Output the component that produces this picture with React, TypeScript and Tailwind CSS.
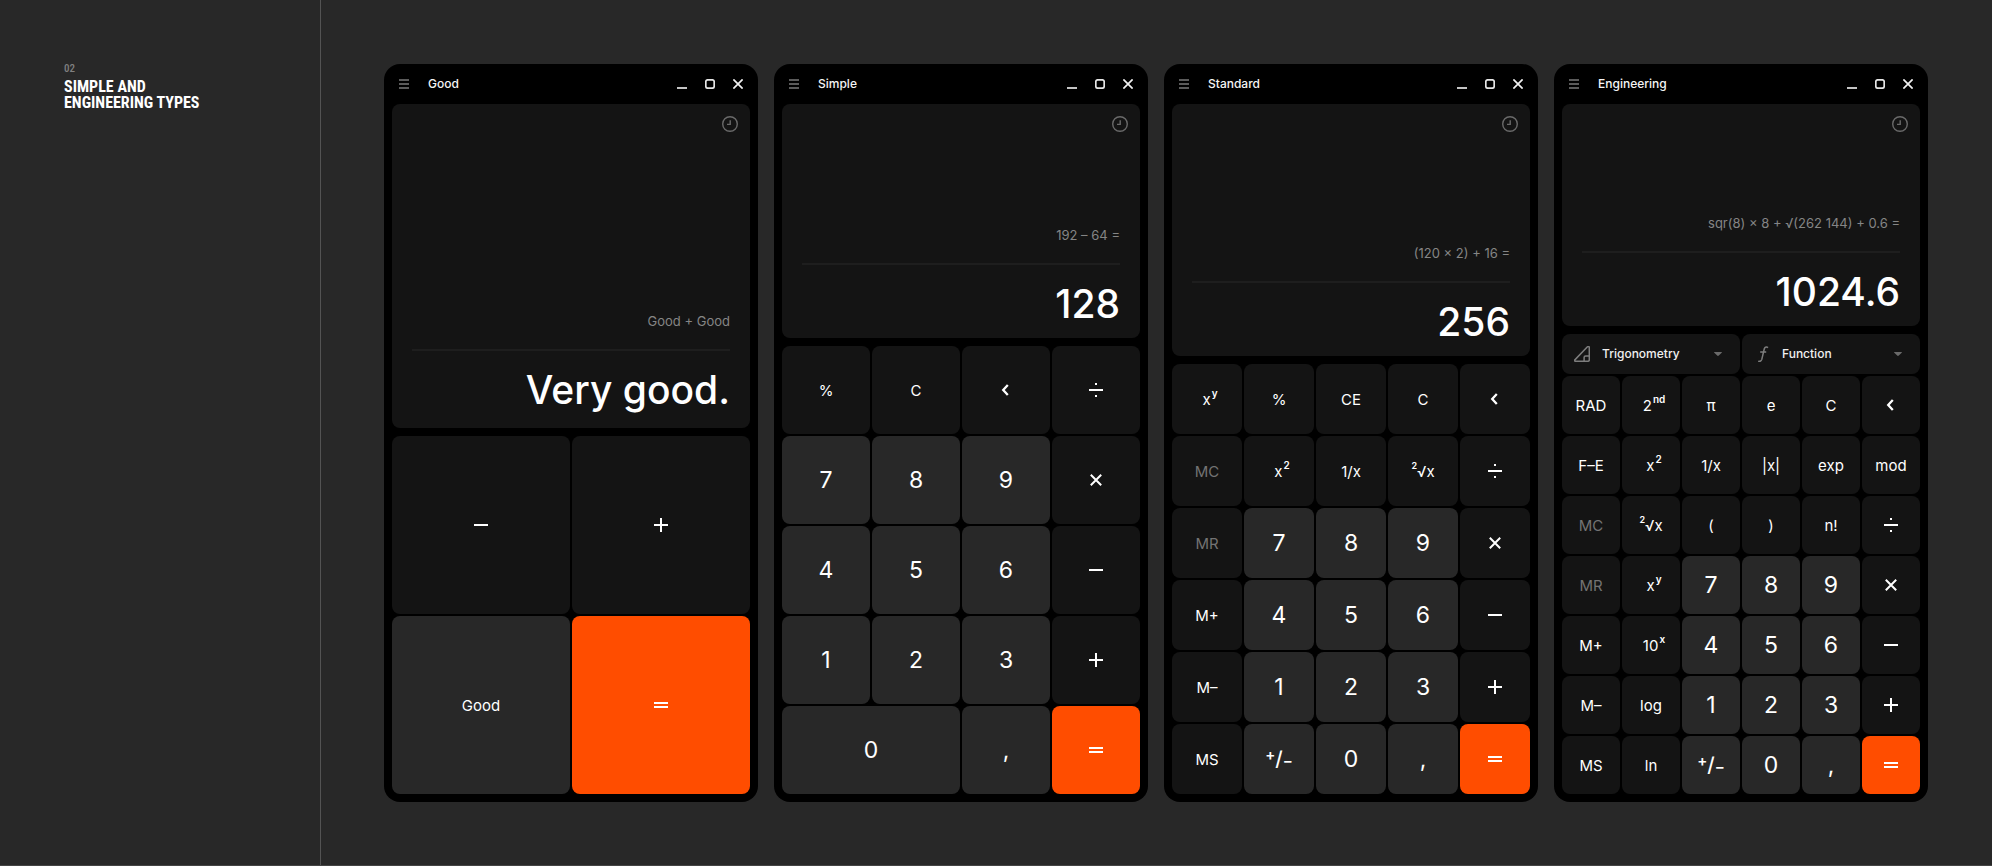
import type { ReactNode } from "react";

type Tone = "dark" | "light" | "accent";

type KeyDef = {
  name: string;
  face?: ReactNode;
  tone?: Tone;
  big?: boolean;
  disabled?: boolean;
  wide?: boolean;
};

const toneClass: Record<Tone, string> = {
  dark: "bg-[#141414] hover:bg-[#1c1c1c]",
  light: "bg-[#282828] hover:bg-[#323232]",
  accent: "bg-[#ff4d00] hover:bg-[#ff6219]",
};

/* ---------- icons ---------- */

function Glyph({ children }: { children: ReactNode }) {
  return (
    <svg viewBox="0 0 14 14" className="size-3.5" fill="none" stroke="currentColor" strokeWidth="2" aria-hidden="true">
      {children}
    </svg>
  );
}

const minusIcon = <Glyph><path d="M0 7h14" /></Glyph>;
const plusIcon = <Glyph><path d="M0 7h14M7 0v14" /></Glyph>;
const equalsIcon = <Glyph><path d="M0 5h14M0 9h14" /></Glyph>;
const timesIcon = <Glyph><path d="M1.8 1.8l10.4 10.4M12.2 1.8L1.8 12.2" /></Glyph>;
const divideIcon = <Glyph><path d="M0 7h14M6 1h2M6 13h2" /></Glyph>;
const backIcon = <Glyph><path d="M8.8 2L4.2 7l4.6 5" strokeWidth="2.3" /></Glyph>;

function MenuIcon() {
  return (
    <svg viewBox="0 0 10 10" className="size-2.5" stroke="#7a7a7a" strokeWidth="1.6" aria-hidden="true">
      <path d="M0 1h10M0 5h10M0 9h10" />
    </svg>
  );
}

function MinimizeIcon() {
  return (
    <svg viewBox="0 0 10 10" className="size-2.5" stroke="#c4c4c4" strokeWidth="2" aria-hidden="true">
      <path d="M0 9h10" />
    </svg>
  );
}

function MaximizeIcon() {
  return (
    <svg viewBox="0 0 10 10" className="size-2.5" fill="none" stroke="#e6e6e6" strokeWidth="1.7" aria-hidden="true">
      <rect x="0.8" y="0.8" width="8.4" height="8.4" rx="2" />
    </svg>
  );
}

function CloseIcon() {
  return (
    <svg viewBox="0 0 10 10" className="size-2.5" stroke="#f2f2f2" strokeWidth="1.7" aria-hidden="true">
      <path d="M0.4 0.4l9.2 9.2M9.6 0.4L0.4 9.6" />
    </svg>
  );
}

function HistoryIcon() {
  return (
    <svg viewBox="0 0 16 16" className="size-4" fill="none" stroke="#6a6a6a" strokeWidth="1.4" aria-hidden="true">
      <circle cx="8" cy="8" r="7.3" />
      <path d="M8.2 4.2v4.2H5" />
    </svg>
  );
}

function TriangleIcon() {
  return (
    <svg viewBox="0 0 16 16" className="size-4 shrink-0" fill="none" stroke="#7d7d7d" strokeWidth="1.5" strokeLinejoin="round" aria-hidden="true">
      <path d="M13.2 1C14.4 0 15.3 0.4 15.3 1.7V13.8C15.3 14.8 14.8 15.3 13.8 15.3H1.6C0.4 15.3 0.2 14.5 1.1 13.6Z" />
      <path d="M15.3 10H11.6C10.6 10 10.1 10.5 10.1 11.5V15.3" />
    </svg>
  );
}

function FunctionIcon() {
  return (
    <svg viewBox="0 0 16 16" className="size-4 shrink-0" fill="none" stroke="#7d7d7d" strokeWidth="1.5" aria-hidden="true">
      <path d="M14 1.6C13 0.6 10.9 0.4 10.3 2.8L7.8 13.4C7.2 15.4 5.4 15.6 4.2 15.1M6.2 6H12.2" />
    </svg>
  );
}

function CaretIcon() {
  return (
    <svg viewBox="0 0 8 4" className="pointer-events-none h-1 w-2 shrink-0" fill="#6a6a6a" aria-hidden="true">
      <path d="M0.6 0H7.4C8 0 8 0.5 7.7 0.8L4.8 3.6C4.3 4.1 3.7 4.1 3.2 3.6L0.3 0.8C0 0.5 0 0 0.6 0Z" />
    </svg>
  );
}

/* ---------- key faces ---------- */

function Power({ base, exp }: { base: string; exp: string }) {
  return (
    <span className="pl-1.5">
      {base}
      <sup className="-top-2 ml-px text-[10px] font-semibold">{exp}</sup>
    </span>
  );
}

const rootFace = (
  <span>
    <sup className="-top-2 text-[9px] font-semibold">2</sup>√x
  </span>
);

const signFace = (
  <span className="text-[20px] font-medium">
    <sup className="-top-1.5 text-[15px] font-semibold">+</sup>/
    <sub className="bottom-0 text-[15px] font-semibold">−</sub>
  </span>
);

/* ---------- key sets ---------- */

const digit = (name: string, wide = false): KeyDef => ({ name, tone: "light", big: true, wide });
const fn = (name: string, face?: ReactNode): KeyDef => ({ name, face });
const off = (name: string): KeyDef => ({ name, disabled: true });

const divide = fn("divide", divideIcon);
const times = fn("multiply", timesIcon);
const minus = fn("minus", minusIcon);
const plus = fn("plus", plusIcon);
const back = fn("backspace", backIcon);
const equals: KeyDef = { name: "equals", face: equalsIcon, tone: "accent" };
const square = fn("x squared", <Power base="x" exp="2" />);
const power = fn("x to the y", <Power base="x" exp="y" />);
const root = fn("square root", rootFace);
const sign: KeyDef = { name: "plus minus", face: signFace, tone: "light" };

const goodKeys: KeyDef[] = [minus, plus, { name: "Good", tone: "light" }, equals];

const simpleKeys: KeyDef[] = [
  fn("%"), fn("C"), back, divide,
  digit("7"), digit("8"), digit("9"), times,
  digit("4"), digit("5"), digit("6"), minus,
  digit("1"), digit("2"), digit("3"), plus,
  digit("0", true), digit(","), equals,
];

const standardKeys: KeyDef[] = [
  power, fn("%"), fn("CE"), fn("C"), back,
  off("MC"), square, fn("1/x"), root, divide,
  off("MR"), digit("7"), digit("8"), digit("9"), times,
  fn("M+"), digit("4"), digit("5"), digit("6"), minus,
  fn("M–"), digit("1"), digit("2"), digit("3"), plus,
  fn("MS"), sign, digit("0"), digit(","), equals,
];

const engineeringKeys: KeyDef[] = [
  fn("RAD"), fn("second functions", <Power base="2" exp="nd" />), fn("π"), fn("e"), fn("C"), back,
  fn("F–E"), square, fn("1/x"), fn("|x|"), fn("exp"), fn("mod"),
  off("MC"), root, fn("("), fn(")"), fn("n!"), divide,
  off("MR"), power, digit("7"), digit("8"), digit("9"), times,
  fn("M+"), fn("10 to the x", <Power base="10" exp="x" />), digit("4"), digit("5"), digit("6"), minus,
  fn("M–"), fn("log"), digit("1"), digit("2"), digit("3"), plus,
  fn("MS"), fn("ln"), sign, digit("0"), digit(","), equals,
];

/* ---------- parts ---------- */

function Key({ def }: { def: KeyDef }) {
  const size = def.big ? "text-[23px]" : "text-[15px]";
  const color = def.disabled ? "text-[#737373]" : "text-white";
  const span = def.wide ? "col-span-2" : "aspect-square";
  return (
    <button
      type="button"
      disabled={def.disabled}
      aria-label={def.face ? def.name : undefined}
      className={`flex min-w-0 items-center justify-center rounded-lg leading-none ${size} ${color} ${span} ${toneClass[def.tone ?? "dark"]}`}
    >
      {def.face ?? def.name}
    </button>
  );
}

function Picker({ label, icon }: { label: string; icon: ReactNode }) {
  return (
    <label className="flex h-10 min-w-0 items-center gap-3 rounded-lg bg-[#141414] pr-[18px] pl-3">
      {icon}
      <select aria-label={label} className="min-w-0 flex-1 appearance-none bg-transparent text-xs font-medium text-[#f0f0f0] outline-none">
        <option>{label}</option>
      </select>
      <CaretIcon />
    </label>
  );
}

function WindowButton({ label, children }: { label: string; children: ReactNode }) {
  return (
    <button type="button" aria-label={label} className="flex size-7 shrink-0 items-center justify-center">
      {children}
    </button>
  );
}

type CalculatorProps = {
  title: string;
  expression: string;
  result: string;
  resultBox?: string;
  columns: string;
  keys: KeyDef[];
  children?: ReactNode;
};

function Calculator({ title, expression, result, resultBox = "h-[73px] pt-[3px]", columns, keys, children }: CalculatorProps) {
  return (
    <section aria-label={title} className="flex min-w-0 flex-col rounded-2xl bg-black">
      <header className="flex h-10 items-center px-1.5">
        <WindowButton label="Menu"><MenuIcon /></WindowButton>
        <h2 className="ml-2.5 flex-1 text-xs font-medium text-[#f5f5f5]">{title}</h2>
        <WindowButton label="Minimize"><MinimizeIcon /></WindowButton>
        <WindowButton label="Maximize"><MaximizeIcon /></WindowButton>
        <WindowButton label="Close"><CloseIcon /></WindowButton>
      </header>
      <div className="flex flex-1 flex-col gap-2 px-2 pb-2">
        <div className="flex flex-1 flex-col rounded-lg bg-[#141414]">
          <button type="button" aria-label="History" className="m-3 self-end"><HistoryIcon /></button>
          <div className="mt-auto px-5 text-right">
            <p className="mb-[18px] text-[13px] leading-5 text-[#858585]">{expression}</p>
            <hr className="border-t-2 border-[#1e1e1e]" />
            <output className={`flex items-center justify-end text-[39px] leading-none font-medium whitespace-nowrap text-white ${resultBox}`}>
              {result}
            </output>
          </div>
        </div>
        <div className="flex flex-col gap-0.5">
          {children}
          <div className={`grid gap-0.5 ${columns}`}>
            {keys.map((def, i) => (
              <Key key={i} def={def} />
            ))}
          </div>
        </div>
      </div>
    </section>
  );
}

export default function App() {
  return (
    <div className="flex min-h-screen border-b border-[#444444] bg-[#282828] font-['Inter',sans-serif] text-white">
      <aside className="w-80 shrink-0 px-16 pt-[63px] font-['Roboto_Condensed','Roboto',sans-serif]">
        <p className="mb-1 text-[11px] leading-3 font-medium text-[#808080]">02</p>
        <h1 className="text-base leading-4 font-bold whitespace-nowrap uppercase">
          Simple and
          <br />
          engineering types
        </h1>
      </aside>
      <main className="grid min-w-0 flex-1 grid-cols-4 gap-4 border-l border-[#535353] pt-16 pr-16 pb-[63px] pl-[63px]">
        <Calculator title="Good" expression="Good + Good" result="Very good." resultBox="h-[77px]" columns="grid-cols-2" keys={goodKeys} />
        <Calculator title="Simple" expression="192 – 64 =" result="128" columns="grid-cols-4" keys={simpleKeys} />
        <Calculator title="Standard" expression="(120 × 2) + 16 =" result="256" columns="grid-cols-5" keys={standardKeys} />
        <Calculator
          title="Engineering"
          expression="sqr(8) × 8 + √(262 144) + 0.6 ="
          result="1024.6"
          columns="grid-cols-6"
          keys={engineeringKeys}
        >
          <div className="grid grid-cols-2 gap-0.5">
            <Picker label="Trigonometry" icon={<TriangleIcon />} />
            <Picker label="Function" icon={<FunctionIcon />} />
          </div>
        </Calculator>
      </main>
    </div>
  );
}
